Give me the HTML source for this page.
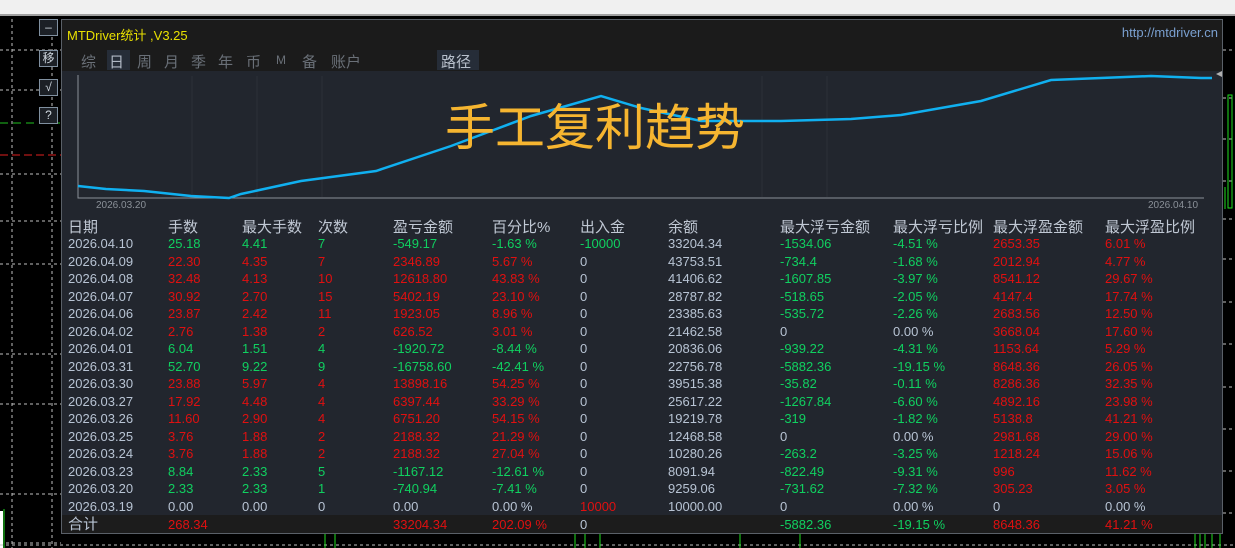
<!DOCTYPE html>
<html><head><meta charset="utf-8"><style>
*{margin:0;padding:0;box-sizing:border-box}
body{width:1235px;height:548px;background:#000;position:relative;overflow:hidden;font-family:"Liberation Sans","Noto Sans CJK SC",sans-serif;}
.abs{position:absolute}
.top{left:0;top:0;width:1235px;height:16px;background:#f0f0f0;border-bottom:2px solid #a0a0a0}
.panel{left:61px;top:19px;width:1162px;height:515px;background:#22262e;border:1px solid #5a6068}
.hdr{left:0;top:0;width:1160px;height:51px;background:#1b1b1b}
.btn{left:39px;width:19px;height:17px;border:1px solid #8090a0;background:#1c2026;color:#d0d8e0;font-size:12px;text-align:center;line-height:15px}
.row{position:absolute;left:0;width:1160px;height:17px;font-size:13px;line-height:17px}
.row span{position:absolute;top:0;white-space:nowrap}
.c0{left:6px}.c1{left:106px}.c2{left:180px}.c3{left:256px}.c4{left:331px}.c5{left:430px}.c6{left:518px}.c7{left:606px}.c8{left:718px}.c9{left:831px}.c10{left:931px}.c11{left:1043px}
.w{color:#b8c4d4}.g{color:#10d060}.r{color:#e01010}
.th span{color:#c0c8d4;font-size:15px}
.tab{font-size:15px;color:#6a7078;top:31px}
</style></head><body>
<div class="abs top"></div>
<svg class="abs" style="left:0;top:19px" width="61" height="529">
<g stroke="#c0c0c0" stroke-dasharray="3,3" stroke-width="1" fill="none">
<line x1="12" y1="0" x2="12" y2="529"/><line x1="52" y1="0" x2="52" y2="529"/>
<line x1="0" y1="31" x2="61" y2="31"/><line x1="0" y1="71" x2="61" y2="71"/><line x1="0" y1="155" x2="61" y2="155"/><line x1="0" y1="202" x2="61" y2="202"/><line x1="0" y1="245" x2="61" y2="245"/><line x1="0" y1="335" x2="61" y2="335"/><line x1="0" y1="385" x2="61" y2="385"/><line x1="0" y1="475" x2="61" y2="475"/><line x1="0" y1="524" x2="61" y2="524"/>
</g>
<line x1="0" y1="104" x2="61" y2="104" stroke="#20c020" stroke-dasharray="8,5"/>
<line x1="0" y1="136" x2="61" y2="136" stroke="#e02020" stroke-dasharray="8,4"/>
<rect x="0" y="492" width="3" height="37" fill="#fff"/><line x1="4" y1="490" x2="4" y2="529" stroke="#20e020"/>
</svg>
<div class="abs btn" style="top:19px">–</div>
<div class="abs btn" style="top:50px">移</div>
<div class="abs btn" style="top:79px">√</div>
<div class="abs btn" style="top:107px">?</div>
<svg class="abs" style="left:1223px;top:19px" width="12" height="529">
<g stroke="#c0c0c0" stroke-dasharray="3,3"><line x1="0" y1="31" x2="12" y2="31"/><line x1="0" y1="79" x2="12" y2="79"/><line x1="0" y1="120" x2="12" y2="120"/><line x1="0" y1="162" x2="12" y2="162"/><line x1="0" y1="200" x2="12" y2="200"/><line x1="0" y1="240" x2="12" y2="240"/><line x1="0" y1="283" x2="12" y2="283"/><line x1="0" y1="325" x2="12" y2="325"/><line x1="0" y1="368" x2="12" y2="368"/><line x1="0" y1="410" x2="12" y2="410"/><line x1="0" y1="452" x2="12" y2="452"/><line x1="0" y1="494" x2="12" y2="494"/></g>
<rect x="5" y="76" width="4" height="113" fill="none" stroke="#20e020"/><line x1="2" y1="168" x2="2" y2="190" stroke="#20e020"/>
</svg>
<svg class="abs" style="left:0;top:533px" width="1235" height="15">
<line x1="0" y1="12" x2="1235" y2="12" stroke="#c0c0c0" stroke-dasharray="3,3"/>
<g stroke="#20e020"><line x1="325" y1="0" x2="325" y2="15"/><line x1="335" y1="0" x2="335" y2="15"/><line x1="575" y1="0" x2="575" y2="15"/><line x1="585" y1="0" x2="585" y2="15"/><line x1="600" y1="0" x2="600" y2="15"/><line x1="740" y1="0" x2="740" y2="15"/><line x1="800" y1="0" x2="800" y2="15"/><line x1="1195" y1="0" x2="1195" y2="15"/><line x1="1200" y1="0" x2="1200" y2="15"/><line x1="1205" y1="0" x2="1205" y2="15"/><line x1="1212" y1="0" x2="1212" y2="15"/><line x1="1220" y1="0" x2="1220" y2="15"/></g>
</svg>
<div class="abs panel">
<div class="abs hdr"></div>
<div class="abs" style="left:5px;top:5px;font-size:13px;color:#e8e000">MTDriver统计 ,V3.25</div>
<div class="abs" style="right:4px;top:5px;font-size:13px;color:#7aa0d0">http://mtdriver.cn</div>
<div class="abs tab" style="left:19px">综</div>
<div class="abs" style="left:45px;top:30px;width:23px;height:20px;background:#262d38"></div>
<div class="abs tab" style="left:47px;color:#b0b8c4">日</div>
<div class="abs tab" style="left:75px">周</div><div class="abs tab" style="left:102px">月</div><div class="abs tab" style="left:129px">季</div><div class="abs tab" style="left:156px">年</div><div class="abs tab" style="left:184px">币</div><div class="abs tab" style="left:214px;font-size:12px;top:33px">M</div><div class="abs tab" style="left:240px">备</div><div class="abs tab" style="left:269px">账户</div>
<div class="abs" style="left:375px;top:30px;width:42px;height:20px;background:#262d38"></div>
<div class="abs tab" style="left:379px;color:#b8c0cc">路径</div>
<svg class="abs" style="left:0;top:51px" width="1160" height="150">
<g stroke="#2c3038"><line x1="130" y1="5" x2="130" y2="126"/><line x1="195" y1="5" x2="195" y2="126"/><line x1="260" y1="5" x2="260" y2="126"/><line x1="700" y1="5" x2="700" y2="126"/><line x1="765" y1="5" x2="765" y2="126"/></g>
<polyline fill="none" stroke="#8a9098" points="16,4 16,127 1142,127"/>
<polyline fill="none" stroke="#10b0f0" stroke-width="2.5" points="16,115 44,118 82,120 129,125 167,127 179,123 239,110 314,100 389,75 469,45 539,25 579,37 639,50 719,50 789,48 839,44 919,30 989,9 1039,7 1089,5 1139,7 1150,7"/>
<polygon points="1160,0 1154,3 1160,6" fill="#b0b0b0"/>
</svg>
<div class="abs" style="left:34px;top:180px;font-size:10px;color:#8a9098">2026.03.20</div>
<div class="abs" style="left:1086px;top:180px;font-size:10px;color:#8a9098">2026.04.10</div>
<div class="abs" style="left:383px;top:74px;font-size:50px;color:#f6b530;font-family:'Noto Sans CJK SC',sans-serif;line-height:60px">手工复利趋势</div>
<div class="row th" style="top:198px;height:20px;line-height:20px"><span class="c0">日期</span><span class="c1">手数</span><span class="c2">最大手数</span><span class="c3">次数</span><span class="c4">盈亏金额</span><span class="c5">百分比%</span><span class="c6">出入金</span><span class="c7">余额</span><span class="c8">最大浮亏金额</span><span class="c9">最大浮亏比例</span><span class="c10">最大浮盈金额</span><span class="c11">最大浮盈比例</span></div>
<div class="row" style="top:215px"><span class="c0 w">2026.04.10</span><span class="c1 g">25.18</span><span class="c2 g">4.41</span><span class="c3 g">7</span><span class="c4 g">-549.17</span><span class="c5 g">-1.63 %</span><span class="c6 g">-10000</span><span class="c7 w">33204.34</span><span class="c8 g">-1534.06</span><span class="c9 g">-4.51 %</span><span class="c10 r">2653.35</span><span class="c11 r">6.01 %</span></div>
<div class="row" style="top:232.5px"><span class="c0 w">2026.04.09</span><span class="c1 r">22.30</span><span class="c2 r">4.35</span><span class="c3 r">7</span><span class="c4 r">2346.89</span><span class="c5 r">5.67 %</span><span class="c6 w">0</span><span class="c7 w">43753.51</span><span class="c8 g">-734.4</span><span class="c9 g">-1.68 %</span><span class="c10 r">2012.94</span><span class="c11 r">4.77 %</span></div>
<div class="row" style="top:250px"><span class="c0 w">2026.04.08</span><span class="c1 r">32.48</span><span class="c2 r">4.13</span><span class="c3 r">10</span><span class="c4 r">12618.80</span><span class="c5 r">43.83 %</span><span class="c6 w">0</span><span class="c7 w">41406.62</span><span class="c8 g">-1607.85</span><span class="c9 g">-3.97 %</span><span class="c10 r">8541.12</span><span class="c11 r">29.67 %</span></div>
<div class="row" style="top:267.5px"><span class="c0 w">2026.04.07</span><span class="c1 r">30.92</span><span class="c2 r">2.70</span><span class="c3 r">15</span><span class="c4 r">5402.19</span><span class="c5 r">23.10 %</span><span class="c6 w">0</span><span class="c7 w">28787.82</span><span class="c8 g">-518.65</span><span class="c9 g">-2.05 %</span><span class="c10 r">4147.4</span><span class="c11 r">17.74 %</span></div>
<div class="row" style="top:285px"><span class="c0 w">2026.04.06</span><span class="c1 r">23.87</span><span class="c2 r">2.42</span><span class="c3 r">11</span><span class="c4 r">1923.05</span><span class="c5 r">8.96 %</span><span class="c6 w">0</span><span class="c7 w">23385.63</span><span class="c8 g">-535.72</span><span class="c9 g">-2.26 %</span><span class="c10 r">2683.56</span><span class="c11 r">12.50 %</span></div>
<div class="row" style="top:302.5px"><span class="c0 w">2026.04.02</span><span class="c1 r">2.76</span><span class="c2 r">1.38</span><span class="c3 r">2</span><span class="c4 r">626.52</span><span class="c5 r">3.01 %</span><span class="c6 w">0</span><span class="c7 w">21462.58</span><span class="c8 w">0</span><span class="c9 w">0.00 %</span><span class="c10 r">3668.04</span><span class="c11 r">17.60 %</span></div>
<div class="row" style="top:320px"><span class="c0 w">2026.04.01</span><span class="c1 g">6.04</span><span class="c2 g">1.51</span><span class="c3 g">4</span><span class="c4 g">-1920.72</span><span class="c5 g">-8.44 %</span><span class="c6 w">0</span><span class="c7 w">20836.06</span><span class="c8 g">-939.22</span><span class="c9 g">-4.31 %</span><span class="c10 r">1153.64</span><span class="c11 r">5.29 %</span></div>
<div class="row" style="top:337.5px"><span class="c0 w">2026.03.31</span><span class="c1 g">52.70</span><span class="c2 g">9.22</span><span class="c3 g">9</span><span class="c4 g">-16758.60</span><span class="c5 g">-42.41 %</span><span class="c6 w">0</span><span class="c7 w">22756.78</span><span class="c8 g">-5882.36</span><span class="c9 g">-19.15 %</span><span class="c10 r">8648.36</span><span class="c11 r">26.05 %</span></div>
<div class="row" style="top:355px"><span class="c0 w">2026.03.30</span><span class="c1 r">23.88</span><span class="c2 r">5.97</span><span class="c3 r">4</span><span class="c4 r">13898.16</span><span class="c5 r">54.25 %</span><span class="c6 w">0</span><span class="c7 w">39515.38</span><span class="c8 g">-35.82</span><span class="c9 g">-0.11 %</span><span class="c10 r">8286.36</span><span class="c11 r">32.35 %</span></div>
<div class="row" style="top:372.5px"><span class="c0 w">2026.03.27</span><span class="c1 r">17.92</span><span class="c2 r">4.48</span><span class="c3 r">4</span><span class="c4 r">6397.44</span><span class="c5 r">33.29 %</span><span class="c6 w">0</span><span class="c7 w">25617.22</span><span class="c8 g">-1267.84</span><span class="c9 g">-6.60 %</span><span class="c10 r">4892.16</span><span class="c11 r">23.98 %</span></div>
<div class="row" style="top:390px"><span class="c0 w">2026.03.26</span><span class="c1 r">11.60</span><span class="c2 r">2.90</span><span class="c3 r">4</span><span class="c4 r">6751.20</span><span class="c5 r">54.15 %</span><span class="c6 w">0</span><span class="c7 w">19219.78</span><span class="c8 g">-319</span><span class="c9 g">-1.82 %</span><span class="c10 r">5138.8</span><span class="c11 r">41.21 %</span></div>
<div class="row" style="top:407.5px"><span class="c0 w">2026.03.25</span><span class="c1 r">3.76</span><span class="c2 r">1.88</span><span class="c3 r">2</span><span class="c4 r">2188.32</span><span class="c5 r">21.29 %</span><span class="c6 w">0</span><span class="c7 w">12468.58</span><span class="c8 w">0</span><span class="c9 w">0.00 %</span><span class="c10 r">2981.68</span><span class="c11 r">29.00 %</span></div>
<div class="row" style="top:425px"><span class="c0 w">2026.03.24</span><span class="c1 r">3.76</span><span class="c2 r">1.88</span><span class="c3 r">2</span><span class="c4 r">2188.32</span><span class="c5 r">27.04 %</span><span class="c6 w">0</span><span class="c7 w">10280.26</span><span class="c8 g">-263.2</span><span class="c9 g">-3.25 %</span><span class="c10 r">1218.24</span><span class="c11 r">15.06 %</span></div>
<div class="row" style="top:442.5px"><span class="c0 w">2026.03.23</span><span class="c1 g">8.84</span><span class="c2 g">2.33</span><span class="c3 g">5</span><span class="c4 g">-1167.12</span><span class="c5 g">-12.61 %</span><span class="c6 w">0</span><span class="c7 w">8091.94</span><span class="c8 g">-822.49</span><span class="c9 g">-9.31 %</span><span class="c10 r">996</span><span class="c11 r">11.62 %</span></div>
<div class="row" style="top:460px"><span class="c0 w">2026.03.20</span><span class="c1 g">2.33</span><span class="c2 g">2.33</span><span class="c3 g">1</span><span class="c4 g">-740.94</span><span class="c5 g">-7.41 %</span><span class="c6 w">0</span><span class="c7 w">9259.06</span><span class="c8 g">-731.62</span><span class="c9 g">-7.32 %</span><span class="c10 r">305.23</span><span class="c11 r">3.05 %</span></div>
<div class="row" style="top:477.5px"><span class="c0 w">2026.03.19</span><span class="c1 w">0.00</span><span class="c2 w">0.00</span><span class="c3 w">0</span><span class="c4 w">0.00</span><span class="c5 w">0.00 %</span><span class="c6 r">10000</span><span class="c7 w">10000.00</span><span class="c8 w">0</span><span class="c9 w">0.00 %</span><span class="c10 w">0</span><span class="c11 w">0.00 %</span></div>
<div class="abs" style="left:0;top:495px;width:1160px;height:18px;background:#1c1c1c"></div>
<div class="row" style="top:496px"><span class="c0 w" style="font-size:15px">合计</span><span class="c1 r">268.34</span><span class="c4 r">33204.34</span><span class="c5 r">202.09 %</span><span class="c6 w">0</span><span class="c8 g">-5882.36</span><span class="c9 g">-19.15 %</span><span class="c10 r">8648.36</span><span class="c11 r">41.21 %</span></div>
</div>
</body></html>
